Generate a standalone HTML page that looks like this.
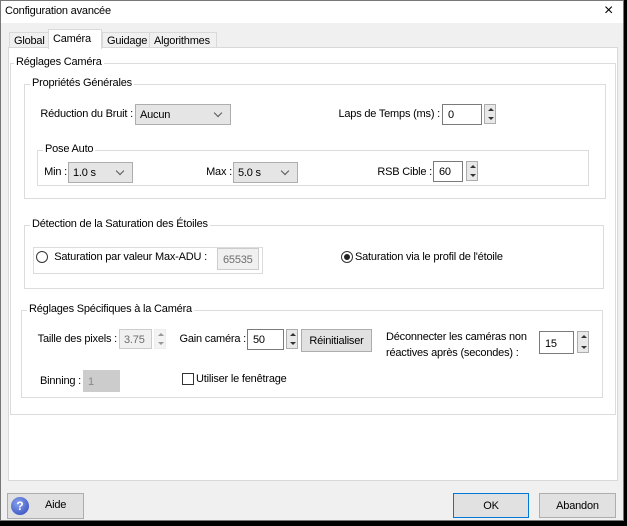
<!DOCTYPE html>
<html><head><meta charset="utf-8"><style>
*{box-sizing:border-box;margin:0;padding:0}
body{width:627px;height:526px;background:#000;position:relative;overflow:hidden;font-family:"Liberation Sans",sans-serif;font-size:11px;letter-spacing:-0.2px;color:#000}
.a{position:absolute;white-space:nowrap}
.win{position:absolute;left:0;top:0;width:624px;height:521px;background:#f0f0f0;border:1px solid #777}
.tb{position:absolute;left:0;top:0;width:622px;height:22px;background:#fff}
.gb{position:absolute;border:1px solid #dcdcdc}
.lbl{position:absolute;background:#fff;padding:0 2px;top:-8px;left:5px;white-space:nowrap}
.cb{position:absolute;background:#e5e5e5;border:1px solid #adadad;padding:4px 4px}
.cb::after{content:"";position:absolute;right:9px;top:5px;width:5px;height:5px;border-right:1px solid #555;border-bottom:1px solid #555;transform:rotate(45deg)}
.in{position:absolute;background:#fff;border:1px solid #7a7a7a;padding:4px 5px}
.sp{position:absolute;width:12px;border:1px solid #adadad;background:#e8e8e8}
.sp::before{content:"";position:absolute;top:3px;left:3px;border:3px solid transparent;border-bottom:3px solid #333;border-top:none}
.sp::after{content:"";position:absolute;bottom:3px;left:3px;border:3px solid transparent;border-top:3px solid #333;border-bottom:none}
.btn{position:absolute;background:#e1e1e1;border:1px solid #adadad;text-align:center}
.tab{position:absolute;top:31px;height:16px;border:1px solid #d9d9d9;border-bottom:none;background:#f0f0f0;padding:2px 4px}
.r{position:absolute;white-space:nowrap;text-align:right}
</style></head><body>
<div class="win">
<div class="tb"></div>
<div class="a" style="left:4px;top:4px">Configuration avancée</div>
<div class="a" style="left:603px;top:1px;font-size:16px;font-weight:lighter">×</div>
<div class="tab" style="left:8px;width:40px">Global</div>
<div class="tab" style="left:101px;width:48px">Guidage</div>
<div class="tab" style="left:148px;width:68px">Algorithmes</div>
<div class="a" style="left:7px;top:46px;width:610px;height:434px;background:#fff;border:1px solid #d9d9d9"></div>
<div class="tab" style="left:47px;top:28px;height:20px;width:54px;background:#fff;z-index:2;padding-top:3px">Caméra</div>

<div class="gb" style="left:9px;top:62px;width:606px;height:352px"><span class="lbl" style="left:3px">Réglages Caméra</span></div>

<div class="gb" style="left:23px;top:83px;width:582px;height:115px"><span class="lbl">Propriétés Générales</span></div>
<div class="r" style="right:490px;top:107px">Réduction du Bruit :</div>
<div class="cb" style="left:134px;top:103px;width:96px;height:21px">Aucun</div>
<div class="r" style="right:183px;top:107px">Laps de Temps (ms) :</div>
<div class="in" style="left:441px;top:103px;width:40px;height:21px">0</div>
<div class="sp" style="left:483px;top:103px;height:20px"></div>

<div class="gb" style="left:36px;top:149px;width:552px;height:36px"><span class="lbl">Pose Auto</span></div>
<div class="r" style="right:556px;top:165px">Min :</div>
<div class="cb" style="left:67px;top:161px;width:65px;height:21px">1.0 s</div>
<div class="r" style="right:391px;top:165px">Max :</div>
<div class="cb" style="left:232px;top:161px;width:65px;height:21px">5.0 s</div>
<div class="r" style="right:191px;top:165px">RSB Cible :</div>
<div class="in" style="left:432px;top:160px;width:30px;height:21px">60</div>
<div class="sp" style="left:465px;top:160px;height:20px"></div>

<div class="gb" style="left:23px;top:224px;width:580px;height:64px"><span class="lbl">Détection de la Saturation des Étoiles</span></div>
<div class="gb" style="left:32px;top:246px;width:230px;height:27px"></div>
<div class="a" style="left:35px;top:250px;width:12px;height:12px;border:1px solid #333;border-radius:50%"></div>
<div class="r" style="right:416px;top:250px">Saturation par valeur Max-ADU :</div>
<div class="a" style="left:216px;top:247px;width:42px;height:22px;background:#f0f0f0;border:1px solid #ccc;color:#6d6d6d;padding:5px 5px">65535</div>
<div class="a" style="left:340px;top:250px;width:12px;height:12px;border:1px solid #333;border-radius:50%"><div style="position:absolute;left:2px;top:2px;width:6px;height:6px;background:#222;border-radius:50%"></div></div>
<div class="a" style="left:354px;top:250px">Saturation via le profil de l'étoile</div>

<div class="gb" style="left:20px;top:309px;width:582px;height:88px"><span class="lbl">Réglages Spécifiques à la Caméra</span></div>
<div class="r" style="right:506px;top:332px">Taille des pixels :</div>
<div class="a" style="left:118px;top:328px;width:33px;height:20px;background:#f0f0f0;border:1px solid #ccc;color:#6d6d6d;padding:4px 4px">3.75</div>
<div class="sp" style="left:153px;top:328px;height:20px;border-color:#ddd;opacity:.5"></div>
<div class="r" style="right:377px;top:332px">Gain caméra :</div>
<div class="in" style="left:246px;top:328px;width:37px;height:21px">50</div>
<div class="sp" style="left:285px;top:328px;height:20px"></div>
<div class="btn" style="left:300px;top:328px;width:71px;height:23px;padding-top:5px">Réinitialiser</div>
<div class="a" style="left:385px;top:328px;line-height:16px">Déconnecter les caméras non<br>réactives après (secondes) :</div>
<div class="in" style="left:538px;top:330px;width:35px;height:23px;padding-top:6px">15</div>
<div class="sp" style="left:576px;top:330px;height:22px"></div>
<div class="r" style="right:542px;top:374px">Binning :</div>
<div class="a" style="left:82px;top:369px;width:37px;height:22px;background:#ccc;border:1px solid #ccc;color:#888;padding:5px 4px">1</div>
<div class="a" style="left:181px;top:372px;width:12px;height:12px;border:1px solid #333;background:#fff"></div>
<div class="a" style="left:195px;top:372px">Utiliser le fenêtrage</div>

<div class="btn" style="left:6px;top:492px;width:77px;height:26px"></div>
<div class="a" style="left:10px;top:496px;width:18px;height:18px;border-radius:50%;background:radial-gradient(circle at 40% 35%,#8aa3f0,#2a44b8);color:#fff;font-weight:bold;font-size:12px;text-align:center;line-height:18px">?</div>
<div class="a" style="left:44px;top:498px">Aide</div>
<div class="btn" style="left:452px;top:492px;width:76px;height:25px;border:1px solid #0078d7;padding-top:6px">OK</div>
<div class="btn" style="left:538px;top:492px;width:77px;height:25px;padding-top:6px">Abandon</div>
</div>
</body></html>
